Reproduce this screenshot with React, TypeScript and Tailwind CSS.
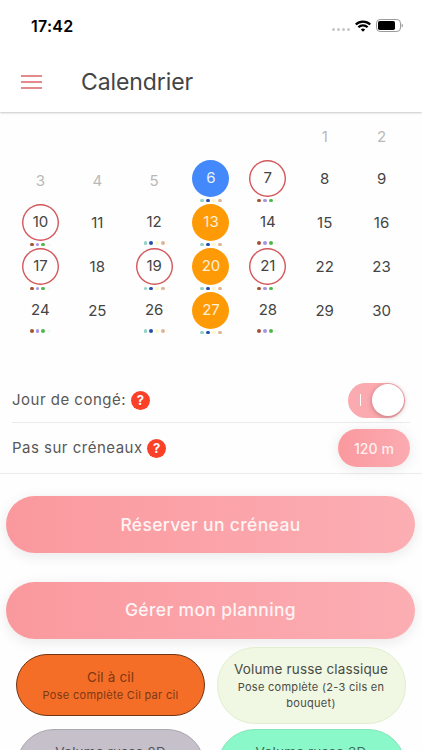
import clsx from "clsx";

type Day = {
  label: string;
  look?: "off" | "ring" | "today" | "full";
  dots?: string[];
};

const warm = ["bg-[#a5532f]", "bg-[#a893e3]", "bg-[#4fb84a]", "bg-[#f3faf3]"];
const cool = ["bg-[#8fd3c3]", "bg-[#2450ad]", "bg-[#fdf5cb]", "bg-[#dcb596]"];

const days: Day[] = [
  {label: ""},
  {label: ""},
  {label: ""},
  {label: ""},
  {label: ""},
  {label: "1", look: "off"},
  {label: "2", look: "off"},
  {label: "3", look: "off"},
  {label: "4", look: "off"},
  {label: "5", look: "off"},
  {label: "6", look: "today", dots: cool},
  {label: "7", look: "ring", dots: warm},
  {label: "8"},
  {label: "9"},
  {label: "10", look: "ring", dots: warm},
  {label: "11"},
  {label: "12", dots: cool},
  {label: "13", look: "full", dots: cool},
  {label: "14", dots: warm},
  {label: "15"},
  {label: "16"},
  {label: "17", look: "ring", dots: warm},
  {label: "18"},
  {label: "19", look: "ring", dots: cool},
  {label: "20", look: "full", dots: cool},
  {label: "21", look: "ring", dots: warm},
  {label: "22"},
  {label: "23"},
  {label: "24", dots: warm},
  {label: "25"},
  {label: "26", dots: cool},
  {label: "27", look: "full", dots: cool},
  {label: "28", dots: warm},
  {label: "29"},
  {label: "30"},
];

const StatusBar = () => {
  return (
    <div className="flex h-[51px] items-center justify-between pl-[31px] pr-[18px]">
      <p className="text-[16px] font-semibold tracking-[0.25px] text-black">17:42</p>
      <div className="flex items-center">
        <div className="mt-2 mr-[5px] flex gap-[1.5px]">
          <div className="h-[3.5px] w-[3.5px] rounded-full bg-[#c6c6c6]" />
          <div className="h-[3.5px] w-[3.5px] rounded-full bg-[#c6c6c6]" />
          <div className="h-[3.5px] w-[3.5px] rounded-full bg-[#c6c6c6]" />
          <div className="h-[3.5px] w-[3.5px] rounded-full bg-[#c6c6c6]" />
        </div>
        <svg className="mr-[5px]" width="16" height="12" viewBox="0 0 16 12" fill="none" stroke="#000" strokeWidth="2.3">
          <path d="M0.8 4.5a10.3 10.3 0 0 1 14.4 0" />
          <path d="M3.4 7.3a6.6 6.6 0 0 1 9.2 0" />
          <path d="M8 11.8 5.8 9.6a3.2 3.2 0 0 1 4.4 0z" fill="#000" stroke="none" />
        </svg>
        <svg width="28" height="13" viewBox="0 0 28 13">
          <rect x="0.5" y="0.5" width="24" height="12" rx="3.6" fill="none" stroke="#9b9b9b" />
          <rect x="2" y="2" width="17" height="9" rx="1.8" fill="#000" />
          <path d="M25.6 4.5c1.8 0.6 1.8 3.4 0 4z" fill="#9b9b9b" />
        </svg>
      </div>
    </div>
  );
};

const Header = () => {
  return (
    <header className="h-[112px] bg-white shadow-[0_1px_2px_rgba(0,0,0,0.22)]">
      <StatusBar />
      <div className="flex h-[61px] items-center pl-[21px]">
        <div className="flex w-[21px] flex-col gap-[4px]">
          <div className="h-[2px] bg-[#e38a8c]" />
          <div className="h-[2px] bg-[#e38a8c]" />
          <div className="h-[2px] bg-[#e38a8c]" />
        </div>
        <h1 className="ml-[39px] pt-0.5 text-[23px] tracking-[-0.1px] text-[#444]">Calendrier</h1>
      </div>
    </header>
  );
};

const DayCell = ({label, look, dots}: Day) => {
  const round = look === "ring" || look === "today" || look === "full";
  return (
    <div className="flex h-11 flex-col items-center pt-[3.5px]">
      <div
        className={clsx(
          "flex h-[37px] w-[37px] shrink-0 items-center justify-center rounded-full text-[15px]",
          look === "ring" && "text-[#444] shadow-[inset_0_0_0_1.4px_#d4565a]",
          look === "today" && "bg-[#4489fb] text-[#e9f1ff]",
          look === "full" && "bg-[#fe9a05] text-[#fff0d8]",
          look === "off" && "pt-[6px] text-[#b9b9b9]",
          !look && !dots && "pt-[2px] text-[#444]",
          !look && dots && "text-[#444]"
        )}
      >
        {label}
      </div>
      {dots && (
        <div className={clsx("flex gap-[2px]", round ? "mt-[2px]" : "mt-[0.5px]")}>
          {dots.map((color) => (
            <div key={color} className={clsx("h-[3.8px] w-[3.8px] rounded-full", color)} />
          ))}
        </div>
      )}
    </div>
  );
};

const Help = () => {
  return (
    <div className="flex h-[19px] w-[19px] items-center justify-center rounded-full bg-[#fa4027] pt-px text-[13px] font-bold tracking-normal text-white">
      ?
    </div>
  );
};

const Settings = () => {
  return (
    <section className="mt-[46px] h-[96px] border-b border-[#ebebeb] text-[15px] tracking-[0.49px] text-[#585858]">
      <div className="mx-3 flex h-[45px] items-center justify-between border-b border-[#ebebeb]">
        <div className="flex items-center gap-[5px]">
          <p>Jour de congé:</p>
          <Help />
        </div>
        <div className="mr-[5px] flex h-[35px] w-[57px] items-center justify-between rounded-full bg-[#fbaab0] pl-[12px] pr-[1.5px]">
          <div className="h-[12px] w-px bg-white" />
          <div className="h-[32px] w-[32px] rounded-full bg-white shadow-[0_1px_5px_rgba(100,40,40,0.4)]" />
        </div>
      </div>
      <div className="mx-3 flex h-[50px] items-center justify-between">
        <div className="flex items-center gap-[4.5px]">
          <p className="pt-px">Pas sur créneaux</p>
          <Help />
        </div>
        <button className="h-[38px] w-[72px] rounded-full bg-linear-to-r from-[#fa999e] to-[#fbabb1] text-[14px] font-medium tracking-[0.1px] text-[#fff1f1] shadow-[0_2px_14px_rgba(0,0,0,0.09)]">
          120 m
        </button>
      </div>
    </section>
  );
};

const WideButton = ({text}: {text: string}) => {
  return (
    <button className="h-[57px] w-full rounded-full bg-linear-to-r from-[#fa999d] via-[#fba3a9] to-[#fbaeb3] pt-px text-[17.5px] font-medium tracking-[0.35px] text-[#fff4f4] shadow-[0_3px_14px_rgba(0,0,0,0.09)]">
      {text}
    </button>
  );
};

type ServiceProps = {
  title: string;
  detail?: string;
  className: string;
};

const Service = ({title, detail, className}: ServiceProps) => {
  return (
    <div
      className={clsx(
        "flex w-[189px] flex-col items-center rounded-[38px] border px-3 text-center",
        detail ? "justify-center pt-px" : "pt-[13px]",
        className
      )}
    >
      <p className="whitespace-nowrap text-[13.5px] leading-[19px] tracking-[0.15px]">{title}</p>
      {detail && <p className="text-[11px] leading-4 tracking-[0.29px]">{detail}</p>}
    </div>
  );
};

const App = () => {
  return (
    <div className="h-[750px] w-full overflow-hidden bg-[#fefefe] font-[Inter,'Liberation_Sans',sans-serif]">
      <Header />
      <div className="mx-auto grid w-[398px] grid-cols-7">
        {days.map((day, i) => (
          <DayCell key={i} {...day} />
        ))}
      </div>
      <Settings />
      <div className="ml-[6px] mt-[22px] flex w-[409px] flex-col gap-[28.5px]">
        <WideButton text="Réserver un créneau" />
        <WideButton text="Gérer mon planning" />
      </div>
      <div className="ml-4 mt-[8px] grid w-[390px] grid-cols-[189px_189px] gap-x-[11.5px] gap-y-[5px]">
        <Service
          title="Cil à cil"
          detail="Pose complète Cil par cil"
          className="h-[62px] self-center border-[#713513] bg-[#f46e27] text-[#7d3814]"
        />
        <Service
          title="Volume russe classique"
          detail="Pose complète (2-3 cils en bouquet)"
          className="h-[77px] border-[#e0efd1] bg-[#f0f7e2] text-[#4a4b46]"
        />
        <Service
          title="Volume russe 2D"
          className="h-[77px] border-[#aaa6ae] bg-[#c5c0ca] text-[#55525a]"
        />
        <Service
          title="Volume russe 3D"
          className="h-[77px] border-[#81e6ba] bg-[#8bf8c9] text-[#3f6b59]"
        />
      </div>
    </div>
  );
};

export default App;
